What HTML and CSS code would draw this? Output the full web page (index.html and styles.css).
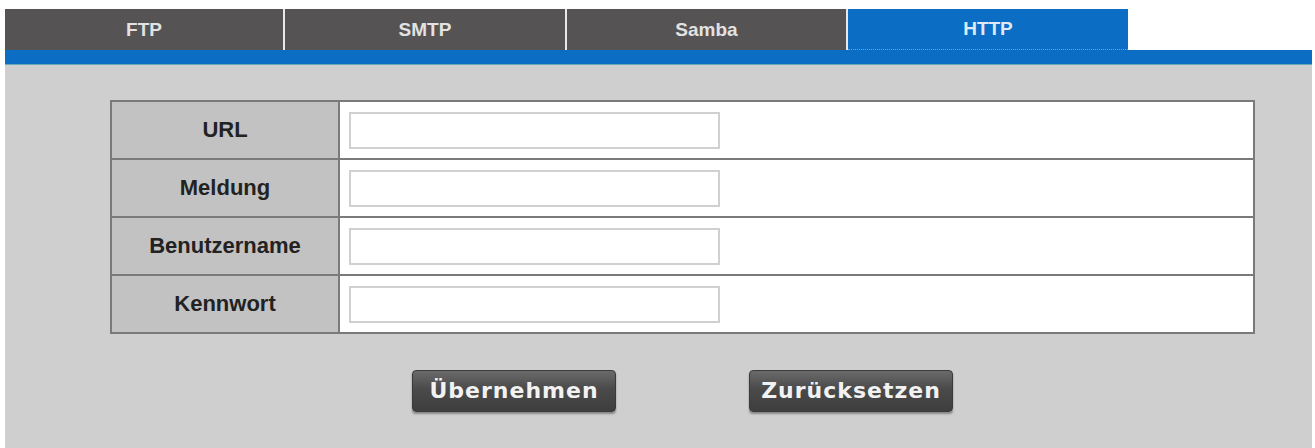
FILE: index.html
```html
<!DOCTYPE html>
<html lang="de">
<head>
<meta charset="utf-8">
<title>HTTP</title>
<link rel="stylesheet" href="styles.css">
</head>
<body>
<div class="page">
  <div class="tabs">
    <div class="tab">FTP</div>
    <div class="tab">SMTP</div>
    <div class="tab">Samba</div>
    <div class="tab active">HTTP</div>
  </div>
  <div class="strip"></div>
  <div class="panel">
    <div class="content">
      <table class="form">
        <tr><th>URL</th><td><input type="text" class="field"></td></tr>
        <tr><th>Meldung</th><td><input type="text" class="field"></td></tr>
        <tr><th>Benutzername</th><td><input type="text" class="field"></td></tr>
        <tr><th>Kennwort</th><td><input type="password" class="field"></td></tr>
      </table>
      <div class="actions">
        <button class="btn">Übernehmen</button>
        <button class="btn">Zurücksetzen</button>
      </div>
    </div>
  </div>
</div>
</body>
</html>
```

FILE: styles.css
```css
html, body {
  margin: 0;
  padding: 0;
  background: #ffffff;
  font-family: "Liberation Sans", Arial, sans-serif;
}
.page {
  padding: 9px 3px 0 5px;
}
.tabs {
  display: flex;
  height: 41px;
}
.tab {
  width: 280px;
  background: #555354;
  color: #e2e2e2;
  font-weight: bold;
  font-size: 19px;
  display: flex;
  align-items: center;
  justify-content: center;
  box-sizing: border-box;
  border-right: 2px solid #e8e8e8;
}
.tab:nth-child(2) { width: 282px; }
.tab:nth-child(3) { width: 281px; }
.tab.active {
  background: #0b6dc4;
  color: #dfe9f5;
  border-right: none;
  border-bottom: 1px dotted #6fa4d6;
}
.strip {
  height: 15px;
  background: #0b6dc4;
  border-bottom: 1px solid #6aa9b8;
  box-sizing: border-box;
}
.panel {
  background: #cfcfcf;
  height: 383px;
  padding: 35px 57px 0 105px;
  box-sizing: border-box;
}
.content {
  display: flex;
  flex-direction: column;
}
.form {
  width: 1145px;
  border-collapse: collapse;
  border: 2px solid #7a7a7a;
}
.form th, .form td {
  border: 2px solid #7a7a7a;
  height: 56px;
  padding: 0;
}
.form th {
  width: 226px;
  background: #c2c2c2;
  color: #222;
  font-size: 22px;
  font-weight: bold;
  text-align: center;
}
.form td {
  background: #ffffff;
  padding-left: 9px;
}
.field {
  display: block;
  width: 371px;
  height: 37px;
  box-sizing: border-box;
  border: 2px solid #d0d0d0;
  background: #fff;
  margin: 0;
}
.actions {
  display: flex;
  justify-content: center;
  gap: 133px;
  margin-top: 36px;
}
.btn {
  width: 204px;
  height: 42px;
  border: 1px solid #3a3a3a;
  border-radius: 4px;
  background: linear-gradient(#6a6a6a, #4a4a4a 45%, #3e3e3e);
  box-shadow: 0 2px 2px rgba(0,0,0,0.35);
  color: #f2f2f2;
  font-family: "DejaVu Sans", sans-serif;
  font-weight: bold;
  font-size: 22px;
  letter-spacing: 1px;
  padding: 0 0 2px;
}
```
